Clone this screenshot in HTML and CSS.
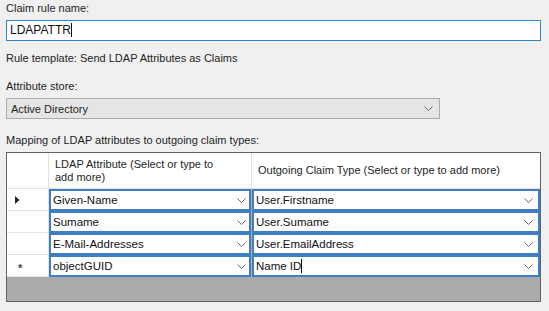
FILE: index.html
```html
<!DOCTYPE html>
<html lang="en">
<head>
  <meta charset="UTF-8">
  <title>Edit Rule - LDAPATTR</title>
  <link rel="stylesheet" href="styles.css">
</head>
<body>
  <div class="form">
    <div class="label">Claim rule name:</div>
    <div class="textbox">LDAPATTR<span class="caret"></span></div>

    <div class="label template">Rule template: Send LDAP Attributes as Claims</div>

    <div class="label store-label">Attribute store:</div>
    <div class="select">
      <span>Active Directory</span>
      <svg class="chev" width="9" height="5" viewBox="0 0 9 5"><path d="M0.5 0.5 L4.5 4.5 L8.5 0.5" fill="none" stroke="#6a6a6a"/></svg>
    </div>

    <div class="label mapping-label">Mapping of LDAP attributes to outgoing claim types:</div>

    <div class="grid">
      <div class="hdr rowhead"></div>
      <div class="hdr">LDAP Attribute (Select or type to<br>add more)</div>
      <div class="hdr">Outgoing Claim Type (Select or type to add more)</div>

      <div class="rowhead"><svg width="5" height="8" viewBox="0 0 5 8"><path d="M0 0 L4.5 4 L0 8 Z" fill="#222"/></svg></div>
      <div class="cell"><span>Given-Name</span><svg class="chev" width="9" height="5" viewBox="0 0 9 5"><path d="M0.5 0.5 L4.5 4.5 L8.5 0.5" fill="none" stroke="#6a6a6a"/></svg></div>
      <div class="cell"><span>User.Firstname</span><svg class="chev" width="9" height="5" viewBox="0 0 9 5"><path d="M0.5 0.5 L4.5 4.5 L8.5 0.5" fill="none" stroke="#6a6a6a"/></svg></div>

      <div class="rowhead"></div>
      <div class="cell"><span>Sumame</span><svg class="chev" width="9" height="5" viewBox="0 0 9 5"><path d="M0.5 0.5 L4.5 4.5 L8.5 0.5" fill="none" stroke="#6a6a6a"/></svg></div>
      <div class="cell"><span>User.Sumame</span><svg class="chev" width="9" height="5" viewBox="0 0 9 5"><path d="M0.5 0.5 L4.5 4.5 L8.5 0.5" fill="none" stroke="#6a6a6a"/></svg></div>

      <div class="rowhead"></div>
      <div class="cell"><span>E-Mail-Addresses</span><svg class="chev" width="9" height="5" viewBox="0 0 9 5"><path d="M0.5 0.5 L4.5 4.5 L8.5 0.5" fill="none" stroke="#6a6a6a"/></svg></div>
      <div class="cell"><span>User.EmailAddress</span><svg class="chev" width="9" height="5" viewBox="0 0 9 5"><path d="M0.5 0.5 L4.5 4.5 L8.5 0.5" fill="none" stroke="#6a6a6a"/></svg></div>

      <div class="rowhead"><span class="star">*</span></div>
      <div class="cell"><span>objectGUID</span><svg class="chev" width="9" height="5" viewBox="0 0 9 5"><path d="M0.5 0.5 L4.5 4.5 L8.5 0.5" fill="none" stroke="#6a6a6a"/></svg></div>
      <div class="cell"><span>Name ID<span class="caret"></span></span><svg class="chev" width="9" height="5" viewBox="0 0 9 5"><path d="M0.5 0.5 L4.5 4.5 L8.5 0.5" fill="none" stroke="#6a6a6a"/></svg></div>

      <div class="empty"></div>
    </div>
  </div>
</body>
</html>
```
FILE: styles.css
```css
body {
  margin: 0;
  background-color: #f0f0f0;
  font-family: "Liberation Sans", Arial, sans-serif;
  font-size: 11px;
  color: #1e1e1e;
}

.form {
  padding: 1px 8px 0 6px;
}

.label {
  line-height: 15px;
}

.textbox {
  margin-top: 4px;
  height: 19px;
  border: 1px solid #2b86d6;
  background-color: white;
  line-height: 19px;
  padding-left: 3px;
  font-size: 12px;
  color: #111;
}

.caret {
  display: inline-block;
  width: 1px;
  height: 14px;
  background-color: #111;
  vertical-align: -3px;
}

.template {
  margin-top: 10px;
}

.store-label {
  margin-top: 13px;
}

.select {
  box-sizing: border-box;
  margin-top: 4px;
  width: 434px;
  height: 21px;
  border: 1px solid #adadad;
  background-color: #e5e5e5;
  display: flex;
  align-items: center;
  justify-content: space-between;
  padding: 0 6px 0 4px;
}

.mapping-label {
  margin-top: 14px;
}

.grid {
  margin-top: 4px;
  border: 1px solid #646464;
  background-color: #ababab;
  display: grid;
  grid-template-columns: 42px 203px 1fr;
  grid-template-rows: 36px repeat(4, 22px) 24px;
}

.hdr {
  background-color: white;
  border-right: 1px solid #e3e3e3;
  border-bottom: 1px solid #e3e3e3;
  padding: 4px 6px;
  line-height: 13px;
  display: flex;
  align-items: center;
}

.hdr:nth-child(3) {
  border-right: none;
}

.rowhead {
  background-color: white;
  border-right: 1px solid #e3e3e3;
  border-bottom: 1px solid #e3e3e3;
  display: flex;
  align-items: center;
  padding-left: 8px;
}

.star {
  font-size: 11px;
  font-weight: bold;
  color: #444;
  margin-left: 3px;
  line-height: 11px;
  margin-top: 5px;
}

.cell {
  background-color: white;
  border: 2px solid #3d7fc2;
  margin-right: 1px;
  display: flex;
  align-items: center;
  justify-content: space-between;
  padding: 0 3px 0 2px;
  font-size: 11.5px;
  color: #111;
}

.cell:nth-child(3n) {
  margin-right: 0;
  padding-right: 5px;
}

.empty {
  grid-column: 1 / 4;
}
```
